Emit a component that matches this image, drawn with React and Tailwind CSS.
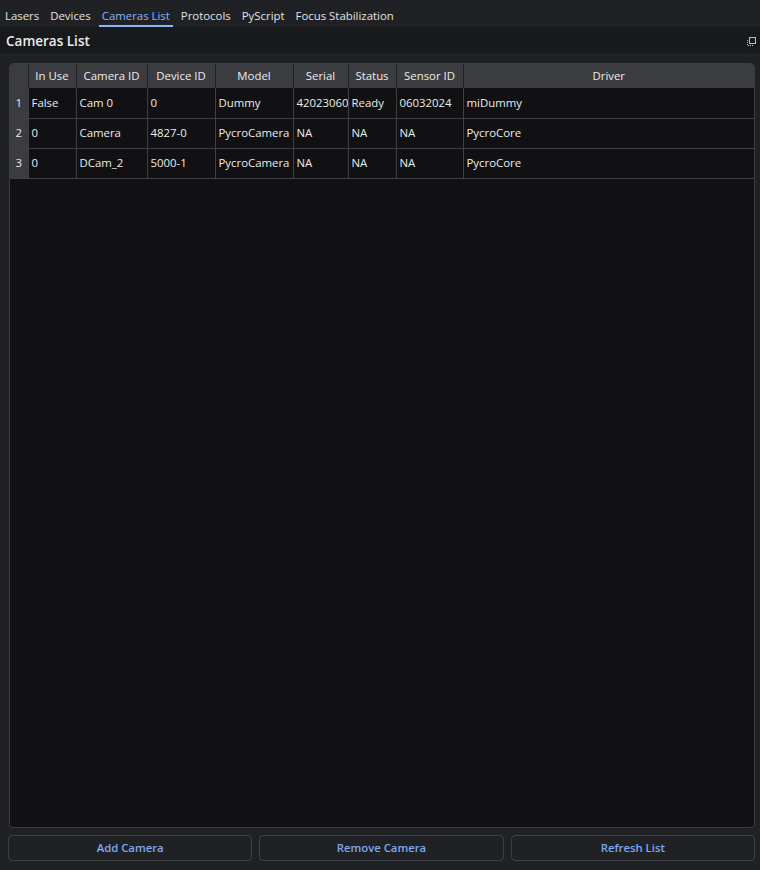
import React from 'react';

const tabs = ['Lasers', 'Devices', 'Cameras List', 'Protocols', 'PyScript', 'Focus Stabilization'];

const columns = [
    { name: 'In Use', w: 'w-[48px]' },
    { name: 'Camera ID', w: 'w-[71px]' },
    { name: 'Device ID', w: 'w-[68px]' },
    { name: 'Model', w: 'w-[78px]' },
    { name: 'Serial', w: 'w-[55px]' },
    { name: 'Status', w: 'w-[48px]' },
    { name: 'Sensor ID', w: 'w-[67px]' },
    { name: 'Driver', w: '' },
];

const rows = [
    ['False', 'Cam 0', '0', 'Dummy', '42023060', 'Ready', '06032024', 'miDummy'],
    ['0', 'Camera', '4827-0', 'PycroCamera', 'NA', 'NA', 'NA', 'PycroCore'],
    ['0', 'DCam_2', '5000-1', 'PycroCamera', 'NA', 'NA', 'NA', 'PycroCore'],
];

function TabBar() {
    return (
        <div className="h-[27px] flex items-start pl-[2px] gap-[5px] bg-[#202124]">
            {tabs.map((t) => {
                const active = t === 'Cameras List';
                return (
                    <div
                        key={t}
                        className={
                            active
                                ? 'h-[27px] px-[3px] pt-[8px] text-[11.4px] leading-[15px] text-[#8ab4f8] border-b-[2px] border-[#8ab4f8] box-border'
                                : 'h-[27px] px-[3px] pt-[8px] text-[11.4px] leading-[15px] text-[#e3e3e3]'
                        }
                    >
                        {t}
                    </div>
                );
            })}
        </div>
    );
}

function CameraTable() {
    return (
        <div className="ml-[1px] flex-1 rounded-[4px] border border-[#3c3d40] bg-[#111113] overflow-hidden">
            <table className="table-fixed w-full border-collapse text-[11.4px] text-[#ececec]">
                <thead>
                    <tr className="h-[24px] bg-[#3b3c3f]">
                        <th className="w-[18px] border-r border-[#202124]"></th>
                        {columns.map((c, i) => (
                            <th
                                key={c.name}
                                className={`${c.w} font-normal text-center ${i < columns.length - 1 ? 'border-r border-[#202124]' : ''}`}
                            >
                                {c.name}
                            </th>
                        ))}
                    </tr>
                </thead>
                <tbody>
                    {rows.map((r, ri) => (
                        <tr key={ri} className="h-[30px] border-b border-[#3f3f42]">
                            <td className="bg-[#3b3c3f] text-center border-r border-[#3f3f42]">{ri + 1}</td>
                            {r.map((v, ci) => (
                                <td
                                    key={ci}
                                    className={`pl-[3px] whitespace-nowrap overflow-hidden ${ci < r.length - 1 ? 'border-r border-[#3f3f42]' : ''}`}
                                >
                                    {v}
                                </td>
                            ))}
                        </tr>
                    ))}
                </tbody>
            </table>
        </div>
    );
}

function App() {
    return (
        <div
            className="w-[760px] h-[870px] bg-[#202124] flex flex-col overflow-hidden"
            style={{ fontFamily: '"Open Sans", "Noto Sans", sans-serif' }}
        >
            <TabBar />

            <div className="h-[26px] bg-[#18191b] flex items-center justify-between pl-[6px] pr-[4px] pt-[2px]">
                <span className="text-[13.5px] font-semibold text-[#ececec]">Cameras List</span>
                <svg width="9" height="9" viewBox="0 0 9 9" className="text-[#bdbdbd]">
                    <rect x="2.5" y="0.5" width="6" height="6" fill="none" stroke="currentColor" />
                    <path d="M0.5 3 V8.5 H6" fill="none" stroke="currentColor" strokeDasharray="1 1" />
                </svg>
            </div>

            <main className="flex-1 flex flex-col pt-[10px] pl-[8px] pr-[5px] pb-[9px] gap-[7px]">
                <CameraTable />

                <div className="h-[26px] flex gap-[7px]">
                    {['Add Camera', 'Remove Camera', 'Refresh List'].map((b) => (
                        <button
                            key={b}
                            className="flex-1 rounded-[4px] border border-[#3f4044] bg-[#202124] text-[11.3px] font-semibold text-[#7fa9f0]"
                        >
                            {b}
                        </button>
                    ))}
                </div>
            </main>
        </div>
    );
}

export default App;
